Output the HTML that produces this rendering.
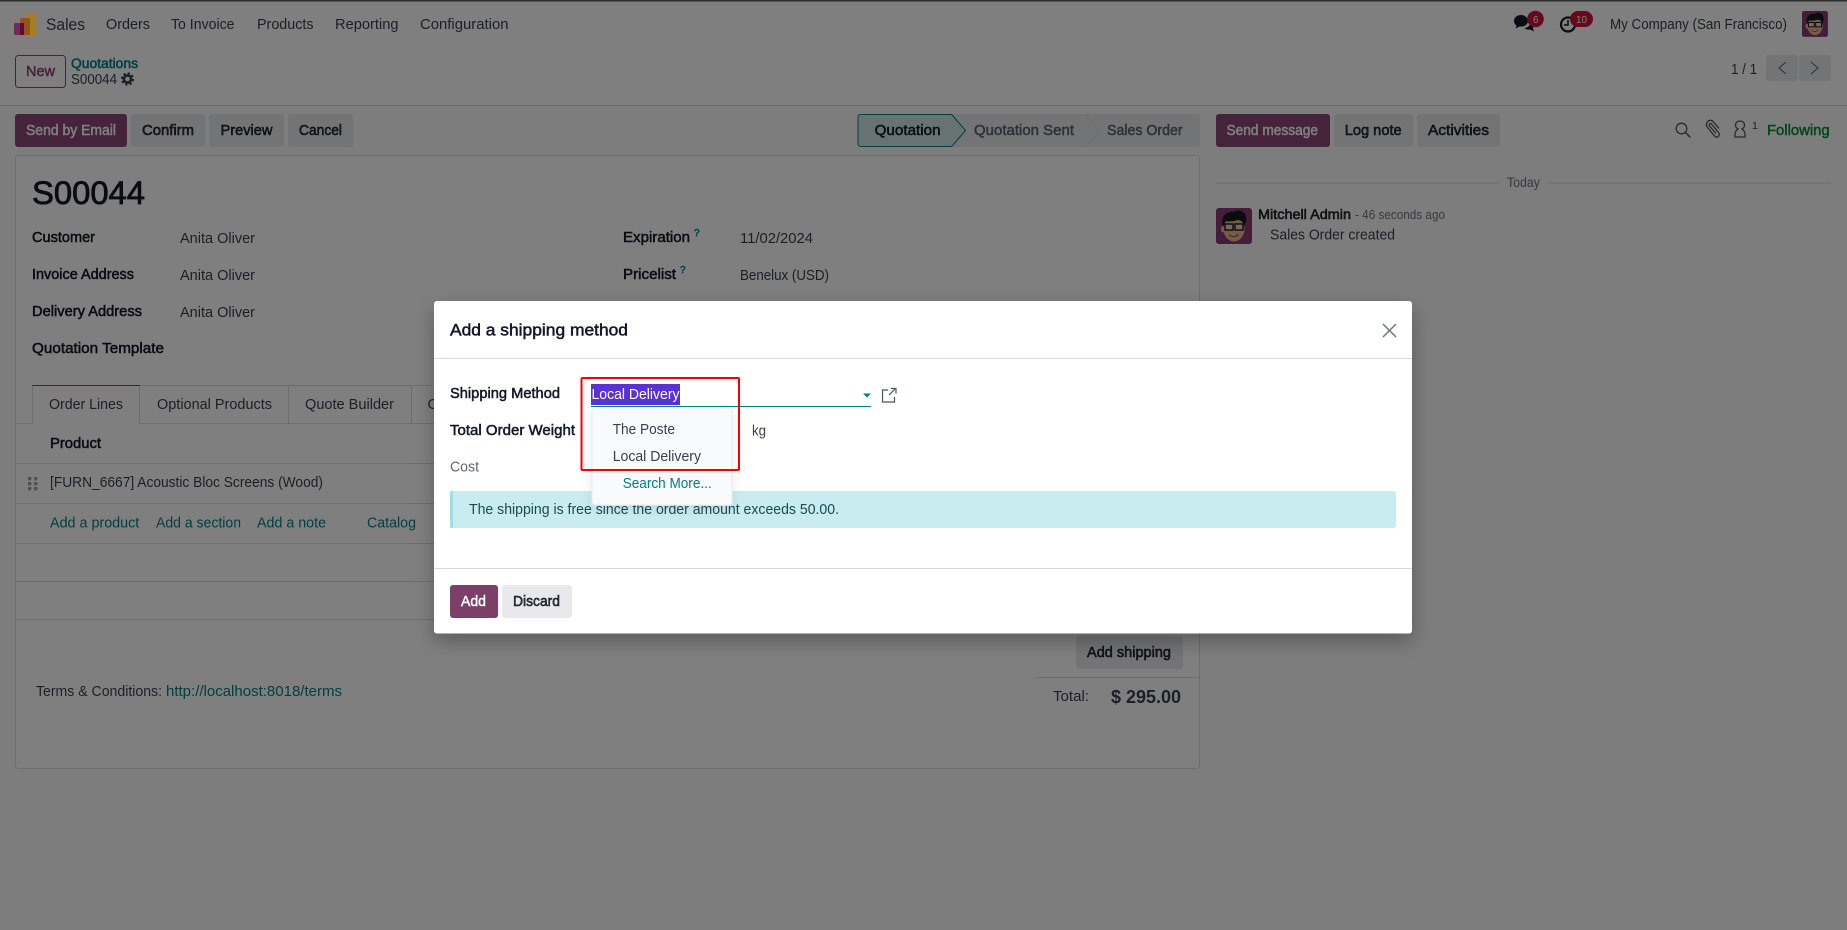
<!DOCTYPE html>
<html lang="en"><head><meta charset="utf-8"><title>S00044</title>
<style>
html,body{margin:0;padding:0;width:1847px;height:930px;overflow:hidden;background:#fff}
svg{display:block;position:absolute;left:0;top:0}
text{font-family:"Liberation Sans",sans-serif;font-size:15px;fill:#374151;white-space:pre}
.m{stroke:currentColor;stroke-width:.5px}
.d{fill:#111827;color:#111827}
.l{fill:#017e84;color:#017e84}
.b{fill:#e7e9ed}
.p{fill:#8a4876}
.ln{stroke:#d8dadd;stroke-width:1;fill:none}
</style></head><body>
<svg width="1847" height="930" viewBox="0 0 1847 930" xmlns="http://www.w3.org/2000/svg">
<defs>
<filter id="ms" x="-5%" y="-10%" width="110%" height="125%"><feDropShadow dx="0" dy="8" stdDeviation="10" flood-color="#000" flood-opacity=".28"/></filter>
<filter id="ds" x="-20%" y="-20%" width="140%" height="140%"><feDropShadow dx="0" dy="3" stdDeviation="6" flood-color="#000" flood-opacity=".08"/></filter>
<g id="av">
<rect width="36" height="36" rx="3" fill="#8b3a70"/>
<ellipse cx="18" cy="21" rx="10.500" ry="12.500" fill="#e9b98f"/>
<ellipse cx="7" cy="21" rx="2" ry="3.500" fill="#e9b98f"/>
<path d="M7 19C4 9 10 3 18 4c3-3 10-1 11 2 2 4 1 9-1 12-1-4-3-6-6-6-3 1-8 2-12 1-2 2-2 4-3 6z" fill="#15181f"/>
<rect x="9" y="16" width="8" height="6" fill="#f0d5b8" stroke="#15181f" stroke-width="1.400"/>
<rect x="19" y="16" width="8" height="6" fill="#f0d5b8" stroke="#15181f" stroke-width="1.400"/>
<path d="M13 27q5 3 9-.5" stroke="#8a3a30" stroke-width="1.200" fill="#fff"/>
</g>
</defs>

<!-- page base -->
<rect x="0" y="105" width="1847" height="825" fill="#fafbfb"/>
<rect x="0" y="0" width="1847" height="48" fill="#fff"/>
<rect x="0" y="0" width="1847" height="1.500" fill="#5d6360"/>
<line x1="0" x2="1847" y1="105.500" y2="105.500" class="ln"/>

<!-- navbar -->
<text x="46" y="30" style="font-size:17px" textLength="39" lengthAdjust="spacingAndGlyphs">Sales</text>
<text x="106" y="29" textLength="44" lengthAdjust="spacingAndGlyphs">Orders</text>
<text x="171" y="29" textLength="63.500" lengthAdjust="spacingAndGlyphs">To Invoice</text>
<text x="257" y="29" textLength="56.500" lengthAdjust="spacingAndGlyphs">Products</text>
<text x="335" y="29" textLength="63.500" lengthAdjust="spacingAndGlyphs">Reporting</text>
<text x="420" y="29" textLength="88.500" lengthAdjust="spacingAndGlyphs">Configuration</text>

<path d="M1521 15c-4 0-7 2.500-7 6 0 2 1 3.500 2.500 4.500l-1 3 4-2c.5 0 1 .1 1.500.1 4 0 7-2.600 7-5.600s-3-6-7-6z" fill="#111827"/>
<path d="M1530 24c2.500.5 3.500 2.500 3 4l1 3.500-4-2c-2 .5-4 0-5.500-1.500 2.500 0 5-2 5.500-4z" fill="#111827"/>
<circle cx="1568" cy="24.500" r="7" fill="none" stroke="#111827" stroke-width="2.200"/>
<path d="M1568 20v5h-4" fill="none" stroke="#111827" stroke-width="1.600"/>
<circle cx="1535.500" cy="19" r="8.300" fill="#d0103a"/>
<rect x="1570" y="11" width="23" height="16" rx="8" fill="#d0103a"/>
<text x="1533" y="23" style="font-size:10.500px;fill:#fff" textLength="5.500" lengthAdjust="spacingAndGlyphs">6</text>
<text x="1576" y="23" style="font-size:10.500px;fill:#fff" textLength="11" lengthAdjust="spacingAndGlyphs">10</text>
<text x="1610" y="29" textLength="177" lengthAdjust="spacingAndGlyphs">My Company (San Francisco)</text>
<use href="#av" transform="translate(1802 11) scale(.72)"/>

<!-- control panel -->
<rect x="15.500" y="55.500" width="50" height="32" rx="3" fill="#fff" stroke="#8a4876"/>
<text x="26" y="76" class="m" style="fill:#8a4876;color:#8a4876" textLength="29" lengthAdjust="spacingAndGlyphs">New</text>
<text x="71" y="68" class="m l" style="font-size:13.500px" textLength="67" lengthAdjust="spacingAndGlyphs">Quotations</text>
<text x="71" y="84" style="font-size:14.500px" textLength="46" lengthAdjust="spacingAndGlyphs">S00044</text>
<g fill="none" stroke="#374151"><circle cx="127.500" cy="79" r="3.600" stroke-width="2.600"/><circle cx="127.500" cy="79" r="5.500" stroke-width="2.200" stroke-dasharray="2.200 2.120"/></g>
<text x="1731" y="74" style="font-size:15px" textLength="26" lengthAdjust="spacingAndGlyphs">1 / 1</text>
<rect x="1766" y="55" width="32" height="26" rx="3" class="b"/>
<rect x="1799" y="55" width="32" height="26" rx="3" class="b"/>
<path d="M1786 62l-7 6 7 6M1811 62l7 6-7 6" fill="none" stroke="#5c6470" stroke-width="1.100"/>

<!-- action buttons -->
<rect x="15" y="114" width="112" height="33" rx="3" class="p"/>
<text x="26" y="135" class="m" style="fill:#fff;color:#fff" textLength="90" lengthAdjust="spacingAndGlyphs">Send by Email</text>
<rect x="131" y="114" width="74" height="33" rx="3" class="b"/>
<text x="142" y="135" class="m" textLength="52" lengthAdjust="spacingAndGlyphs">Confirm</text>
<rect x="209" y="114" width="75" height="33" rx="3" class="b"/>
<text x="220.500" y="135" class="m" textLength="52" lengthAdjust="spacingAndGlyphs">Preview</text>
<rect x="288" y="114" width="65" height="33" rx="3" class="b"/>
<text x="299" y="135" class="m" textLength="43" lengthAdjust="spacingAndGlyphs">Cancel</text>

<!-- status bar -->
<rect x="858" y="114" width="342" height="33" rx="3" class="b"/>
<path d="M861 114.500H951.700L965.500 130.500 951.700 146.500H861q-3 0-3-3V117.500q0-3 3-3z" fill="#cfe5e4" stroke="#017e84"/>
<path d="M1085 114l14 16.500-14 16.500" fill="none" stroke="#d8dadd"/>
<text x="874.600" y="135" class="m d" textLength="66" lengthAdjust="spacingAndGlyphs">Quotation</text>
<text x="974" y="135" class="m" textLength="100" lengthAdjust="spacingAndGlyphs" style="fill:#5a6270;color:#5a6270">Quotation Sent</text>
<text x="1107" y="135" class="m" textLength="75.600" lengthAdjust="spacingAndGlyphs" style="fill:#5a6270;color:#5a6270">Sales Order</text>

<!-- sheet -->
<rect x="15.500" y="155.500" width="1184" height="613" rx="3" fill="#fff" stroke="#d8dadd"/>
<text x="32" y="204" style="font-size:32px;stroke-width:.8px" class="m d" textLength="113" lengthAdjust="spacingAndGlyphs">S00044</text>

<text x="32" y="242" class="m d" textLength="63" lengthAdjust="spacingAndGlyphs" style="font-size:14.500px">Customer</text>
<text x="180" y="243" textLength="75" lengthAdjust="spacingAndGlyphs">Anita Oliver</text>
<text x="32" y="279" class="m d" textLength="102" lengthAdjust="spacingAndGlyphs" style="font-size:14.500px">Invoice Address</text>
<text x="180" y="280" textLength="75" lengthAdjust="spacingAndGlyphs">Anita Oliver</text>
<text x="32" y="316" class="m d" textLength="110" lengthAdjust="spacingAndGlyphs" style="font-size:14.500px">Delivery Address</text>
<text x="180" y="317" textLength="75" lengthAdjust="spacingAndGlyphs">Anita Oliver</text>
<text x="32" y="353" class="m d" textLength="132" lengthAdjust="spacingAndGlyphs" style="font-size:14.500px">Quotation Template</text>

<text x="623" y="242" class="m d" textLength="67" lengthAdjust="spacingAndGlyphs" style="font-size:14.500px">Expiration</text>
<text x="694" y="236" class="m l" style="font-size:10px">?</text>
<text x="740" y="243" textLength="73" lengthAdjust="spacingAndGlyphs">11/02/2024</text>
<text x="623" y="279" class="m d" textLength="53" lengthAdjust="spacingAndGlyphs" style="font-size:14.500px">Pricelist</text>
<text x="680" y="273" class="m l" style="font-size:10px">?</text>
<text x="740" y="280" textLength="89" lengthAdjust="spacingAndGlyphs">Benelux (USD)</text>

<!-- tabs -->
<line x1="16" x2="1199" y1="423.500" y2="423.500" class="ln"/>
<rect x="32" y="385" width="108" height="39" fill="#fff"/>
<line x1="32.500" x2="32.500" y1="385" y2="424" class="ln"/>
<line x1="139.500" x2="139.500" y1="385" y2="424" class="ln"/>
<line x1="32" x2="140" y1="385.500" y2="385.500" stroke="#8a4876"/>
<path d="M140 385.500H434M288.500 386V423M411.500 386V423" class="ln"/>
<text x="49" y="409" textLength="74" lengthAdjust="spacingAndGlyphs">Order Lines</text>
<text x="157" y="409" textLength="115" lengthAdjust="spacingAndGlyphs">Optional Products</text>
<text x="305" y="409" textLength="89" lengthAdjust="spacingAndGlyphs">Quote Builder</text>
<text x="427.500" y="409">O</text>

<!-- order table -->
<text x="50" y="448" class="m d" textLength="51" lengthAdjust="spacingAndGlyphs" style="font-size:14.500px">Product</text>
<path d="M16 463.500H1199M16 503.500H1199M16 543.500H1199M16 581.500H1199M16 619.500H1199" class="ln"/>
<g fill="#9aa0a8"><rect x="28" y="477" width="3.300" height="3.300"/><rect x="34" y="477" width="3.300" height="3.300"/><rect x="28" y="482" width="3.300" height="3.300"/><rect x="34" y="482" width="3.300" height="3.300"/><rect x="28" y="487" width="3.300" height="3.300"/><rect x="34" y="487" width="3.300" height="3.300"/></g>
<text x="50" y="487" textLength="273" lengthAdjust="spacingAndGlyphs">[FURN_6667] Acoustic Bloc Screens (Wood)</text>
<text x="50" y="527.500" class="l" textLength="89.300" lengthAdjust="spacingAndGlyphs">Add a product</text>
<text x="156" y="527.500" class="l" textLength="85" lengthAdjust="spacingAndGlyphs">Add a section</text>
<text x="257" y="527.500" class="l" textLength="69" lengthAdjust="spacingAndGlyphs">Add a note</text>
<text x="367" y="527.500" class="l" textLength="49" lengthAdjust="spacingAndGlyphs">Catalog</text>

<text x="36" y="696" textLength="126" lengthAdjust="spacingAndGlyphs">Terms &amp; Conditions:</text>
<text x="166" y="696" class="l" textLength="176" lengthAdjust="spacingAndGlyphs">http://localhost:8018/terms</text>

<rect x="1076" y="636" width="107" height="33" rx="3" class="b"/>
<text x="1087" y="657" class="m" textLength="84" lengthAdjust="spacingAndGlyphs">Add shipping</text>
<line x1="1036" x2="1199" y1="677.500" y2="677.500" class="ln"/>
<text x="1053" y="701" textLength="36" lengthAdjust="spacingAndGlyphs">Total:</text>
<text x="1111" y="703" style="font-weight:700;font-size:18px" textLength="70" lengthAdjust="spacingAndGlyphs">$ 295.00</text>

<!-- chatter -->
<rect x="1216" y="114" width="114" height="33" rx="3" class="p"/>
<text x="1226.500" y="135" class="m" style="fill:#fff;color:#fff" textLength="91.500" lengthAdjust="spacingAndGlyphs">Send message</text>
<rect x="1334.500" y="114" width="78.500" height="33" rx="3" class="b"/>
<text x="1344.700" y="135" class="m" textLength="57" lengthAdjust="spacingAndGlyphs">Log note</text>
<rect x="1417" y="114" width="83" height="33" rx="3" class="b"/>
<text x="1428" y="135" class="m" textLength="61" lengthAdjust="spacingAndGlyphs">Activities</text>

<g fill="none" stroke="#4b5563" stroke-width="1.300">
<circle cx="1681.500" cy="128.500" r="5.300"/><path d="M1685.500 132.500l4.800 4.800" stroke-width="1.500"/>
<path d="M1716 133.500l-6.500-7.500c-1.200-1.500.8-3.200 2-2l7 8.500c2.500 3-1.500 6.500-4 3.500l-7-8.500c-3.500-4.500 2.500-10 6-5.500l5.500 6.500"/>
<path d="M1735 137v-3c0-3 2-4 3-5-2-1-2.500-3-2.500-4 0-2.500 2-4 4.500-4s4.500 1.500 4.500 4c0 1-.5 3-2.500 4 1 1 3 2 3 5v3z"/>
</g>
<text x="1752" y="129" style="font-size:10.500px">1</text>
<text x="1767" y="135" class="m" style="fill:#0f8a33;color:#0f8a33" textLength="62.600" lengthAdjust="spacingAndGlyphs">Following</text>

<path d="M1216 183H1499M1548 183H1831" class="ln"/>
<text x="1507" y="187" style="font-size:13.500px;fill:#6b7280" textLength="33" lengthAdjust="spacingAndGlyphs">Today</text>
<use href="#av" transform="translate(1216 208)"/>
<text x="1258" y="219" class="m" style="font-size:13.500px" textLength="93" lengthAdjust="spacingAndGlyphs">Mitchell Admin</text>
<text x="1355" y="219" style="font-size:13px;fill:#6b7280" textLength="90" lengthAdjust="spacingAndGlyphs">- 46 seconds ago</text>
<text x="1270" y="239.500" textLength="125" lengthAdjust="spacingAndGlyphs">Sales Order created</text>

<!-- backdrop -->
<rect width="1847" height="930" fill="#000" opacity=".5"/>

<!-- logo (over backdrop for direct colours) -->
<g>
<rect x="26" y="13" width="10" height="22" rx="1" fill="#a87c22"/>
<rect x="20" y="18" width="10" height="17" rx="1" fill="#a8481f"/>
<rect x="14" y="23" width="10" height="12" rx="1" fill="#722a5c"/>
<rect x="20" y="23" width="4" height="12" fill="#560f38"/>
<rect x="26" y="18" width="4" height="17" fill="#8c5a12"/>
</g>

<!-- modal -->
<rect x="434" y="301" width="978" height="332.500" rx="3" fill="#fff" filter="url(#ms)"/>
<text x="450" y="335.500" class="m d" style="font-size:16.500px" textLength="178" lengthAdjust="spacingAndGlyphs">Add a shipping method</text>
<line x1="434" x2="1412" y1="358.500" y2="358.500" class="ln"/>
<path d="M1383 324l13 13M1396 324l-13 13" stroke="#6b7280" stroke-width="1.500" fill="none"/>

<text x="450" y="398" class="m d" style="font-size:14.500px" textLength="110" lengthAdjust="spacingAndGlyphs">Shipping Method</text>
<rect x="591" y="384" width="89" height="21" fill="#5a32d1"/>
<text x="591.500" y="399" style="fill:#fff" textLength="88" lengthAdjust="spacingAndGlyphs">Local Delivery</text>
<line x1="591" x2="871" y1="406.500" y2="406.500" stroke="#017e84"/>
<path d="M863 393.500h8l-4 4z" fill="#017e84"/>
<path d="M888 390h-5.500v12h12v-5M889 395l6.500-6.500M891 388.500h5v5" fill="none" stroke="#4b5563" stroke-width="1.200"/>

<text x="450" y="435" class="m d" style="font-size:14.500px" textLength="125" lengthAdjust="spacingAndGlyphs">Total Order Weight</text>
<text x="752" y="435.500" textLength="14" lengthAdjust="spacingAndGlyphs">kg</text>
<text x="450" y="471.500" style="fill:#5f6672" textLength="29" lengthAdjust="spacingAndGlyphs">Cost</text>

<rect x="450" y="491" width="946" height="37" rx="3" fill="#c8ecef"/>
<path d="M453 491h-1q-2 0-2 2v33q0 2 2 2h1z" fill="#9ddfe4"/>
<text x="469" y="514" style="fill:#1b4a55" textLength="370" lengthAdjust="spacingAndGlyphs">The shipping is free since the order amount exceeds 50.00.</text>

<!-- dropdown -->
<rect x="592" y="408" width="140" height="97" rx="3" fill="#f9fafb" stroke="#e9ebed" filter="url(#ds)"/>
<text x="612.700" y="434" textLength="62.300" lengthAdjust="spacingAndGlyphs">The Poste</text>
<text x="612.700" y="461" textLength="88.300" lengthAdjust="spacingAndGlyphs">Local Delivery</text>
<text x="622.700" y="488" class="l" textLength="89" lengthAdjust="spacingAndGlyphs">Search More...</text>

<!-- annotation -->
<rect x="581.500" y="378" width="157.500" height="92" rx="1" fill="none" stroke="#f50000" stroke-width="2"/>

<line x1="434" x2="1412" y1="568.500" y2="568.500" class="ln"/>
<rect x="450" y="585" width="48" height="33" rx="3" fill="#7c3f68"/>
<text x="461" y="606" class="m" style="fill:#fff;color:#fff" textLength="25" lengthAdjust="spacingAndGlyphs">Add</text>
<rect x="502" y="585" width="70" height="33" rx="3" class="b"/>
<text x="513" y="606" class="m" textLength="47" lengthAdjust="spacingAndGlyphs">Discard</text>
</svg>
</body></html>
